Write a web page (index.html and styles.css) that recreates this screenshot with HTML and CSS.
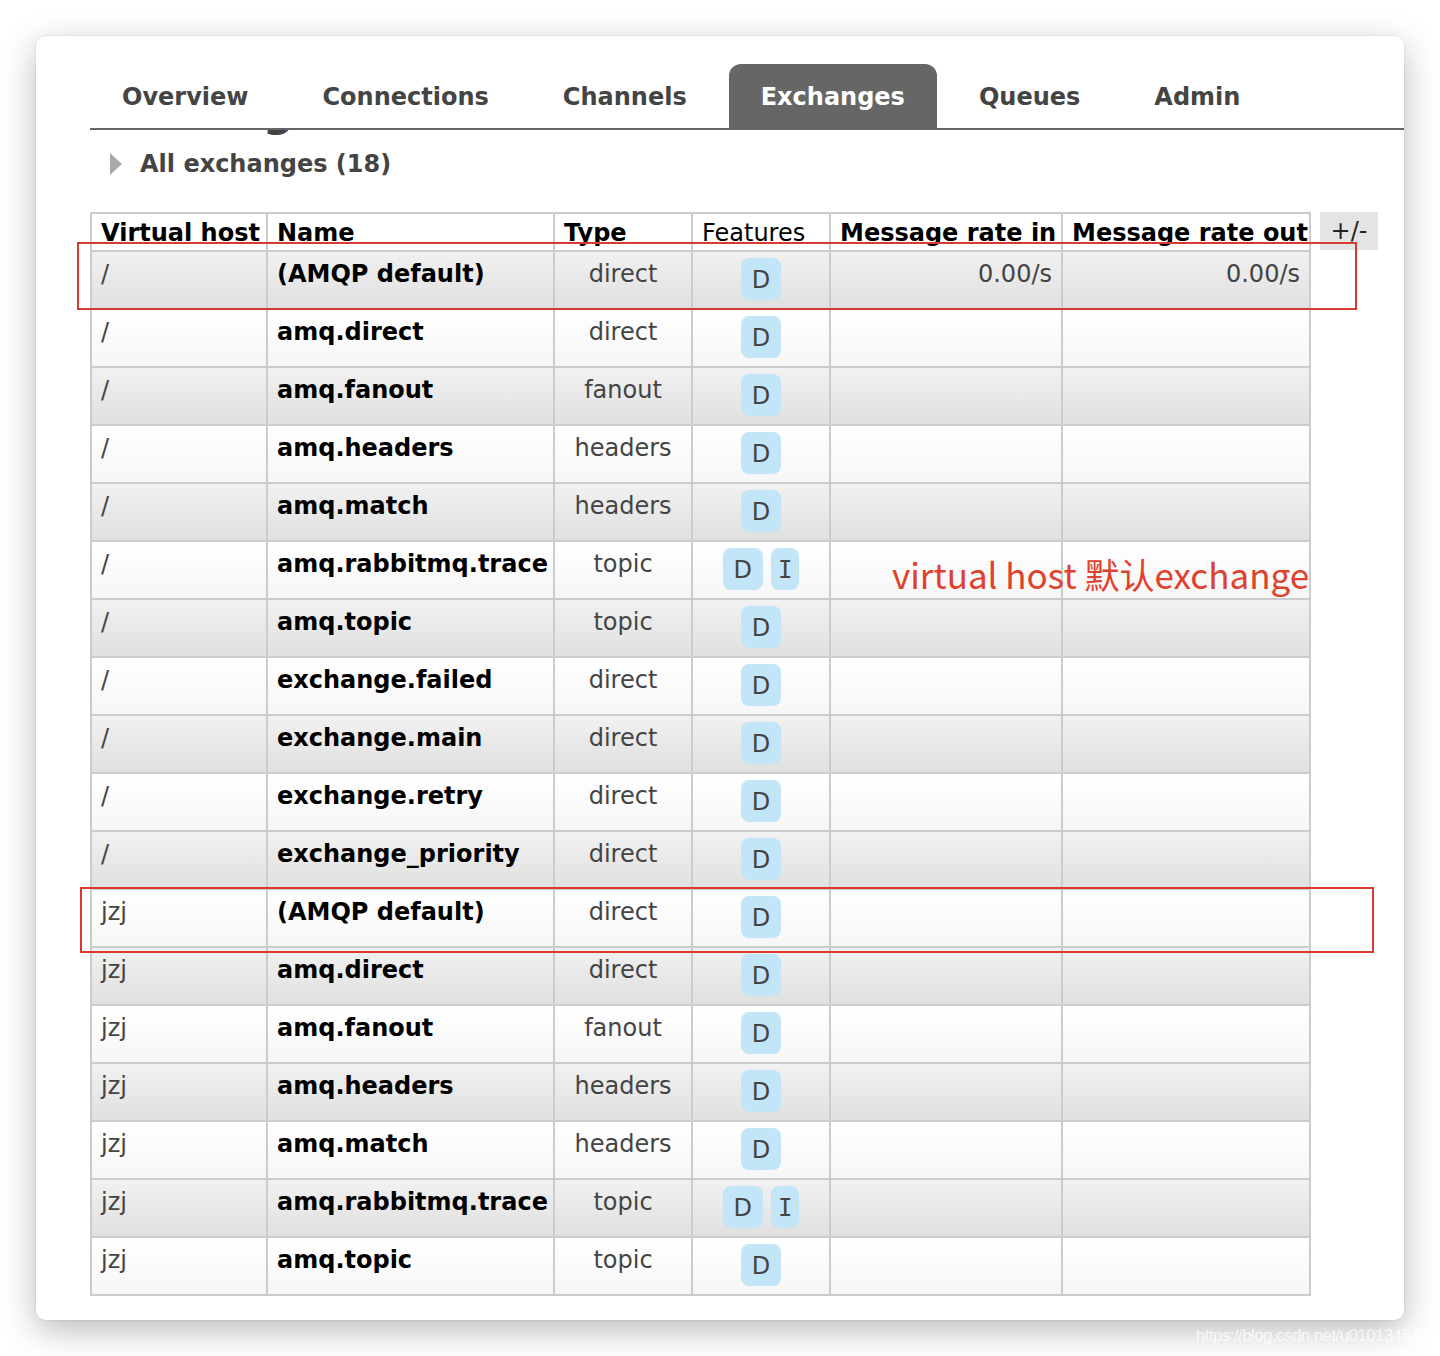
FILE: index.html
```html
<!DOCTYPE html>
<html lang="en">
<head>
<meta charset="utf-8">
<title>Exchanges</title>
<link rel="stylesheet" href="styles.css">
</head>
<body>
<div class="window">
  <nav class="tabs">
    <a class="tab">Overview</a>
    <a class="tab">Connections</a>
    <a class="tab">Channels</a>
    <a class="tab active">Exchanges</a>
    <a class="tab">Queues</a>
    <a class="tab">Admin</a>
  </nav>
  <div class="title-clip">
    <h1 class="page-title">Exchanges</h1>
  </div>
  <div class="section">
    <span class="toggle"></span>
    <h2 class="section-title">All exchanges (18)</h2>
  </div>
  <div class="table-wrap">
    <div class="table">
      <div class="row head">
        <div class="cell b">Virtual host</div>
        <div class="cell b">Name</div>
        <div class="cell b">Type</div>
        <div class="cell">Features</div>
        <div class="cell b">Message rate in</div>
        <div class="cell b">Message rate out</div>
      </div>
      <div class="row odd"><div class="cell vh">/</div><div class="cell name">(AMQP default)</div><div class="cell type">direct</div><div class="cell feat"><span class="badge">D</span></div><div class="cell rate">0.00/s</div><div class="cell rate">0.00/s</div></div>
      <div class="row even"><div class="cell vh">/</div><div class="cell name">amq.direct</div><div class="cell type">direct</div><div class="cell feat"><span class="badge">D</span></div><div class="cell rate"></div><div class="cell rate"></div></div>
      <div class="row odd"><div class="cell vh">/</div><div class="cell name">amq.fanout</div><div class="cell type">fanout</div><div class="cell feat"><span class="badge">D</span></div><div class="cell rate"></div><div class="cell rate"></div></div>
      <div class="row even"><div class="cell vh">/</div><div class="cell name">amq.headers</div><div class="cell type">headers</div><div class="cell feat"><span class="badge">D</span></div><div class="cell rate"></div><div class="cell rate"></div></div>
      <div class="row odd"><div class="cell vh">/</div><div class="cell name">amq.match</div><div class="cell type">headers</div><div class="cell feat"><span class="badge">D</span></div><div class="cell rate"></div><div class="cell rate"></div></div>
      <div class="row even"><div class="cell vh">/</div><div class="cell name">amq.rabbitmq.trace</div><div class="cell type">topic</div><div class="cell feat"><span class="badge">D</span><span class="badge badge-i">I</span></div><div class="cell rate"></div><div class="cell rate"></div></div>
      <div class="row odd"><div class="cell vh">/</div><div class="cell name">amq.topic</div><div class="cell type">topic</div><div class="cell feat"><span class="badge">D</span></div><div class="cell rate"></div><div class="cell rate"></div></div>
      <div class="row even"><div class="cell vh">/</div><div class="cell name">exchange.failed</div><div class="cell type">direct</div><div class="cell feat"><span class="badge">D</span></div><div class="cell rate"></div><div class="cell rate"></div></div>
      <div class="row odd"><div class="cell vh">/</div><div class="cell name">exchange.main</div><div class="cell type">direct</div><div class="cell feat"><span class="badge">D</span></div><div class="cell rate"></div><div class="cell rate"></div></div>
      <div class="row even"><div class="cell vh">/</div><div class="cell name">exchange.retry</div><div class="cell type">direct</div><div class="cell feat"><span class="badge">D</span></div><div class="cell rate"></div><div class="cell rate"></div></div>
      <div class="row odd"><div class="cell vh">/</div><div class="cell name">exchange_priority</div><div class="cell type">direct</div><div class="cell feat"><span class="badge">D</span></div><div class="cell rate"></div><div class="cell rate"></div></div>
      <div class="row even"><div class="cell vh">jzj</div><div class="cell name">(AMQP default)</div><div class="cell type">direct</div><div class="cell feat"><span class="badge">D</span></div><div class="cell rate"></div><div class="cell rate"></div></div>
      <div class="row odd"><div class="cell vh">jzj</div><div class="cell name">amq.direct</div><div class="cell type">direct</div><div class="cell feat"><span class="badge">D</span></div><div class="cell rate"></div><div class="cell rate"></div></div>
      <div class="row even"><div class="cell vh">jzj</div><div class="cell name">amq.fanout</div><div class="cell type">fanout</div><div class="cell feat"><span class="badge">D</span></div><div class="cell rate"></div><div class="cell rate"></div></div>
      <div class="row odd"><div class="cell vh">jzj</div><div class="cell name">amq.headers</div><div class="cell type">headers</div><div class="cell feat"><span class="badge">D</span></div><div class="cell rate"></div><div class="cell rate"></div></div>
      <div class="row even"><div class="cell vh">jzj</div><div class="cell name">amq.match</div><div class="cell type">headers</div><div class="cell feat"><span class="badge">D</span></div><div class="cell rate"></div><div class="cell rate"></div></div>
      <div class="row odd"><div class="cell vh">jzj</div><div class="cell name">amq.rabbitmq.trace</div><div class="cell type">topic</div><div class="cell feat"><span class="badge">D</span><span class="badge badge-i">I</span></div><div class="cell rate"></div><div class="cell rate"></div></div>
      <div class="row even"><div class="cell vh">jzj</div><div class="cell name">amq.topic</div><div class="cell type">topic</div><div class="cell feat"><span class="badge">D</span></div><div class="cell rate"></div><div class="cell rate"></div></div>
    </div>
    <div class="columns-toggle">+/-</div>
  </div>
  <div class="mark mark-top"></div>
  <div class="mark mark-bottom"></div>
  <div class="note">virtual host 默认exchange</div>
</div>
<div class="watermark">https://blog.csdn.net/u010134640</div>
</body>
</html>
```
FILE: styles.css
```css
html, body {
  margin: 0;
}
body {
  width: 1440px;
  height: 1356px;
  padding: 36px 0 0 36px;
  box-sizing: border-box;
  background: #fff;
  font-family: "DejaVu Sans", Verdana, sans-serif;
  position: relative;
  overflow: hidden;
}
.window {
  width: 1368px;
  height: 1284px;
  background: #fff;
  border-radius: 10px;
  box-shadow: 0 10px 34px rgba(0, 0, 0, 0.28), 0 0 0 1px rgba(0, 0, 0, 0.04);
  position: relative;
  overflow: hidden;
}
.tabs {
  display: flex;
  gap: 10px;
  margin-left: 54px;
  padding-top: 28px;
  border-bottom: 2px solid #666;
  background: #fff;
  position: relative;
  z-index: 1;
}
.tab {
  display: block;
  padding: 0 32px;
  height: 64px;
  line-height: 66px;
  font-weight: bold;
  font-size: 24px;
  color: #444;
  border-radius: 12px 12px 0 0;
  overflow: hidden;
}
.tab.active {
  background: #666;
  color: #fff;
}
.title-clip {
  height: 8px;
  margin-left: 54px;
  overflow: hidden;
}
.page-title {
  margin: -40px 0 0 0;
  font-weight: bold;
  font-size: 43px;
  line-height: 43px;
  color: #444;
}
.section {
  display: flex;
  align-items: center;
  gap: 18px;
  margin: 11px 0 0 74px;
}
.toggle {
  width: 0;
  height: 0;
  border-left: 12px solid #aaa;
  border-top: 11px solid transparent;
  border-bottom: 11px solid transparent;
}
.section-title {
  margin: 0;
  font-weight: bold;
  font-size: 24px;
  line-height: 30px;
  color: #444;
}
.table-wrap {
  display: flex;
  align-items: flex-start;
  gap: 9px;
  margin: 33px 0 0 54px;
}
.table {
  border-left: 2px solid #ccc;
  border-top: 2px solid #ccc;
}
.row {
  display: grid;
  grid-template-columns: 176px 287px 138px 138px 232px 248px;
  height: 58px;
  box-sizing: border-box;
  border-bottom: 2px solid #ccc;
}
.row.head {
  height: 38px;
  background: #fff;
}
.row.odd {
  background: linear-gradient(#f1f1f1, #e0e0e0);
}
.row.even {
  background: linear-gradient(#fff, #f6f6f6);
}
.cell {
  box-sizing: border-box;
  border-right: 2px solid #ccc;
  padding: 8px 9px 0 9px;
  font-size: 24px;
  line-height: 29px;
  color: #444;
  white-space: nowrap;
}
.head .cell {
  padding-top: 4px;
  line-height: 30px;
  color: #000;
}
.head .cell.b {
  font-weight: bold;
}
.cell.name {
  font-weight: bold;
  color: #000;
}
.cell.type {
  text-align: center;
}
.cell.feat {
  padding-top: 6px;
  display: flex;
  justify-content: center;
  align-items: flex-start;
  gap: 8px;
}
.cell.rate {
  text-align: right;
}
.badge {
  display: block;
  height: 42px;
  line-height: 44px;
  padding: 0 11px;
  border-radius: 8px;
  background: #c3e5f8;
  color: #444;
  font-size: 24px;
}
.badge-i {
  padding: 0 7px;
  font-family: "DejaVu Sans Mono", monospace;
}
.columns-toggle {
  width: 58px;
  height: 38px;
  background: #e4e4e4;
  text-align: center;
  line-height: 38px;
  font-size: 24px;
  color: #222;
}
.mark {
  position: absolute;
  border: 2px solid #d83b2d;
  box-sizing: border-box;
}
.mark-top {
  left: 41px;
  top: 206px;
  width: 1280px;
  height: 68px;
}
.mark-bottom {
  left: 44px;
  top: 851px;
  width: 1294px;
  height: 66px;
}
.note {
  position: absolute;
  left: 856px;
  top: 520px;
  font-family: "Noto Sans CJK SC", "Noto Sans", sans-serif;
  font-size: 35px;
  line-height: 35px;
  color: #e0412e;
  white-space: nowrap;
}
.watermark {
  position: absolute;
  left: 1196px;
  top: 1326px;
  font-family: "Liberation Sans", Arial, sans-serif;
  font-size: 17px;
  letter-spacing: -0.6px;
  color: rgba(255, 255, 255, 0.75);
  white-space: nowrap;
}
```
